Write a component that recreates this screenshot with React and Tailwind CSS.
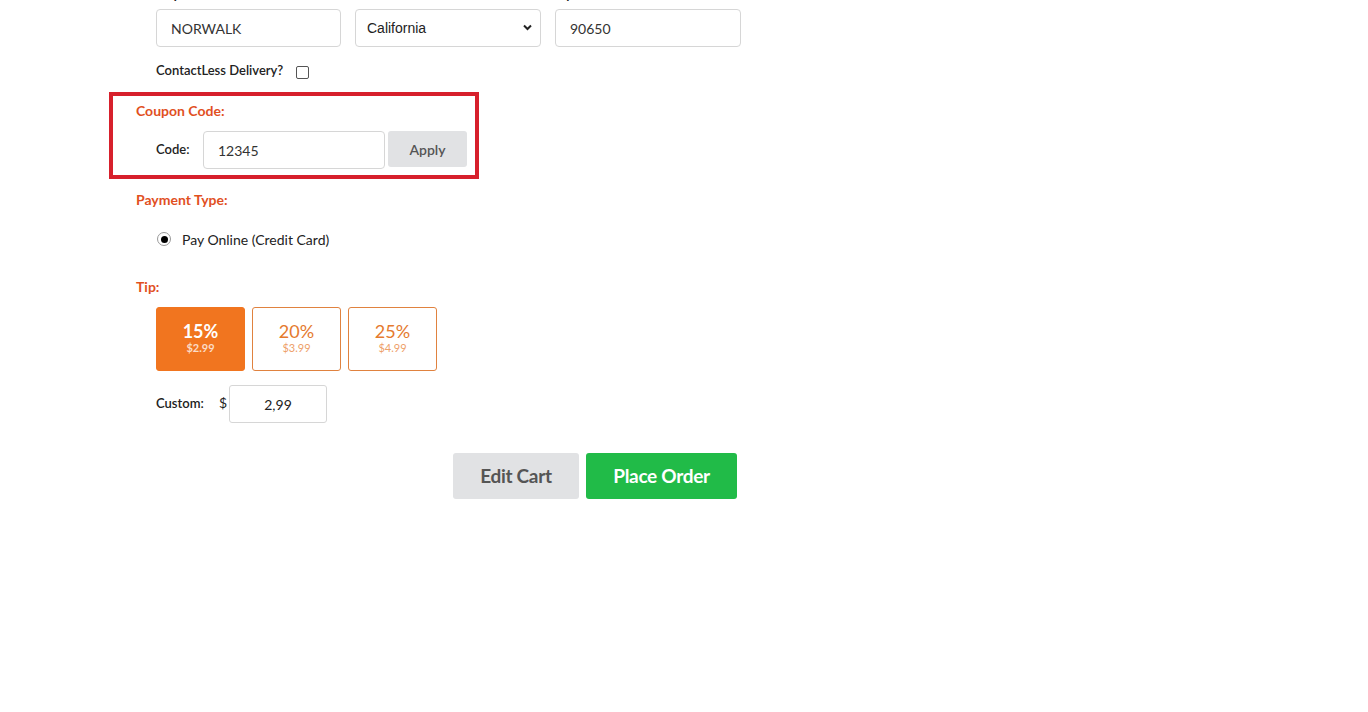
import React, { useState } from "react";

const font = { fontFamily: "Lato, 'Open Sans', Arial, sans-serif" };

function TipOption({ pct, amount, active, onClick }) {
  return (
    <button
      type="button"
      onClick={onClick}
      className={
        active
          ? "w-[89px] h-[64px] pb-[3px] rounded-[3px] bg-[#f1751f] border border-[#f1751f] flex flex-col items-center justify-center"
          : "w-[89px] h-[64px] pb-[3px] rounded-[3px] bg-white border border-[#e0823f] flex flex-col items-center justify-center"
      }
    >
      <span
        className={
          active
            ? "text-[18px] leading-[20px] font-bold text-white"
            : "text-[18px] leading-[20px] font-normal text-[#e57a2e]"
        }
      >
        {pct}
      </span>
      <span
        className={
          active
            ? "text-[11px] leading-[14px] font-bold text-white/75"
            : "text-[11px] leading-[14px] font-normal text-[#eea06a]"
        }
      >
        {amount}
      </span>
    </button>
  );
}

export default function App() {
  const [tip, setTip] = useState(0);
  const tips = [
    ["15%", "$2.99"],
    ["20%", "$3.99"],
    ["25%", "$4.99"],
  ];

  return (
    <div className="min-h-[712px] w-full bg-white text-[#222] overflow-hidden" style={font}>
      <div className="ml-[109px] w-[632px] flex flex-col">
        {/* address row */}
        <div className="-mt-[14px] pl-[47px] flex gap-[14px]">
          <div className="flex flex-col w-[185px]">
            <label className="text-[13px] leading-[16px] font-bold mb-[7px]">City</label>
            <input
              defaultValue="NORWALK"
              className="h-[38px] w-full rounded-[4px] border border-[#d6d6d6] pl-[14px] text-[14px] text-[#333] outline-none"
            />
          </div>
          <div className="flex flex-col w-[186px]">
            <label className="text-[13px] leading-[16px] font-bold mb-[7px]">State</label>
            <div className="relative">
              <select
                defaultValue="California"
                className="appearance-none h-[38px] w-full rounded-[4px] border border-[#d6d6d6] pl-[11px] text-[14px] text-[#222] bg-white outline-none"
                style={{ fontFamily: "Arial, 'Liberation Sans', sans-serif" }}
              >
                <option>California</option>
                <option>Nevada</option>
                <option>Oregon</option>
              </select>
              <svg
                className="absolute right-[9px] top-[15px] pointer-events-none"
                width="9"
                height="7"
                viewBox="0 0 9 7"
              >
                <path d="M1 1.5 L4.5 5 L8 1.5" fill="none" stroke="#222" strokeWidth="2" />
              </svg>
            </div>
          </div>
          <div className="flex flex-col w-[186px]">
            <label className="text-[13px] leading-[16px] font-bold mb-[7px]">Zip</label>
            <input
              defaultValue="90650"
              className="h-[38px] w-full rounded-[4px] border border-[#d6d6d6] pl-[14px] text-[14px] text-[#333] outline-none"
            />
          </div>
        </div>

        {/* contactless */}
        <div className="mt-[14px] pl-[47px] h-[20px] flex items-center gap-[13px]">
          <span className="text-[13px] font-semibold text-[#222]">ContactLess Delivery?</span>
          <span className="w-[13px] h-[13px] rounded-[2px] border border-[#555] bg-white mt-[2px]" />
        </div>

        {/* coupon */}
        <div className="mt-[11px] w-[370px] border-4 border-[#d7202c] pt-[7px] pb-[6px]">
          <div className="pl-[23px] text-[14px] leading-[16px] font-bold text-[#e1501f]">Coupon Code:</div>
          <div className="mt-[12px] pl-[43px] flex items-center">
            <span className="w-[47px] text-[13px] font-semibold text-[#222]">Code:</span>
            <input
              defaultValue="12345"
              className="h-[38px] w-[182px] rounded-[4px] border border-[#d6d6d6] pl-[14px] text-[14px] text-[#333] outline-none"
            />
            <button
              type="button"
              className="ml-[3px] -mt-[2px] h-[36px] w-[79px] rounded-[3px] bg-[#e1e2e4] text-[14px] font-semibold text-[#555]"
            >
              Apply
            </button>
          </div>
        </div>

        {/* payment */}
        <div className="mt-[13px] pl-[27px] text-[14px] leading-[16px] font-bold text-[#e1501f]">Payment Type:</div>
        <div className="mt-[21px] pl-[47px] h-[20px] flex items-center">
          <span className="ml-[1px] w-[14px] h-[14px] rounded-full border border-[#999] bg-white flex items-center justify-center">
            <span className="w-[7px] h-[7px] rounded-full bg-black" />
          </span>
          <span className="ml-[11px] text-[14px] text-[#222]">Pay Online (Credit Card)</span>
        </div>

        {/* tip */}
        <div className="mt-[30px] pl-[27px] text-[14px] leading-[16px] font-bold text-[#e1501f]">Tip:</div>
        <div className="mt-[12px] pl-[47px] flex gap-[7px]">
          {tips.map(([p, a], i) => (
            <TipOption key={p} pct={p} amount={a} active={tip === i} onClick={() => setTip(i)} />
          ))}
        </div>
        <div className="mt-[14px] pl-[47px] flex items-center">
          <span className="w-[63px] text-[13px] font-semibold text-[#222]">Custom:</span>
          <span className="w-[10px] -mt-[4px] text-[14px] text-[#222]">$</span>
          <input
            defaultValue="2,99"
            className="h-[38px] w-[98px] rounded-[3px] border border-[#d6d6d6] text-center text-[14px] text-[#222] outline-none"
          />
        </div>

        {/* actions */}
        <div className="mt-[30px] pr-[4px] flex justify-end gap-[7px]">
          <button
            type="button"
            className="h-[46px] w-[126px] rounded-[3px] bg-[#e1e2e4] text-[19px] font-bold text-[#555] tracking-[-0.3px]"
          >
            Edit Cart
          </button>
          <button
            type="button"
            className="h-[46px] w-[151px] rounded-[3px] bg-[#21bb48] text-[19px] font-bold text-white tracking-[-0.3px]"
          >
            Place Order
          </button>
        </div>
      </div>
    </div>
  );
}
